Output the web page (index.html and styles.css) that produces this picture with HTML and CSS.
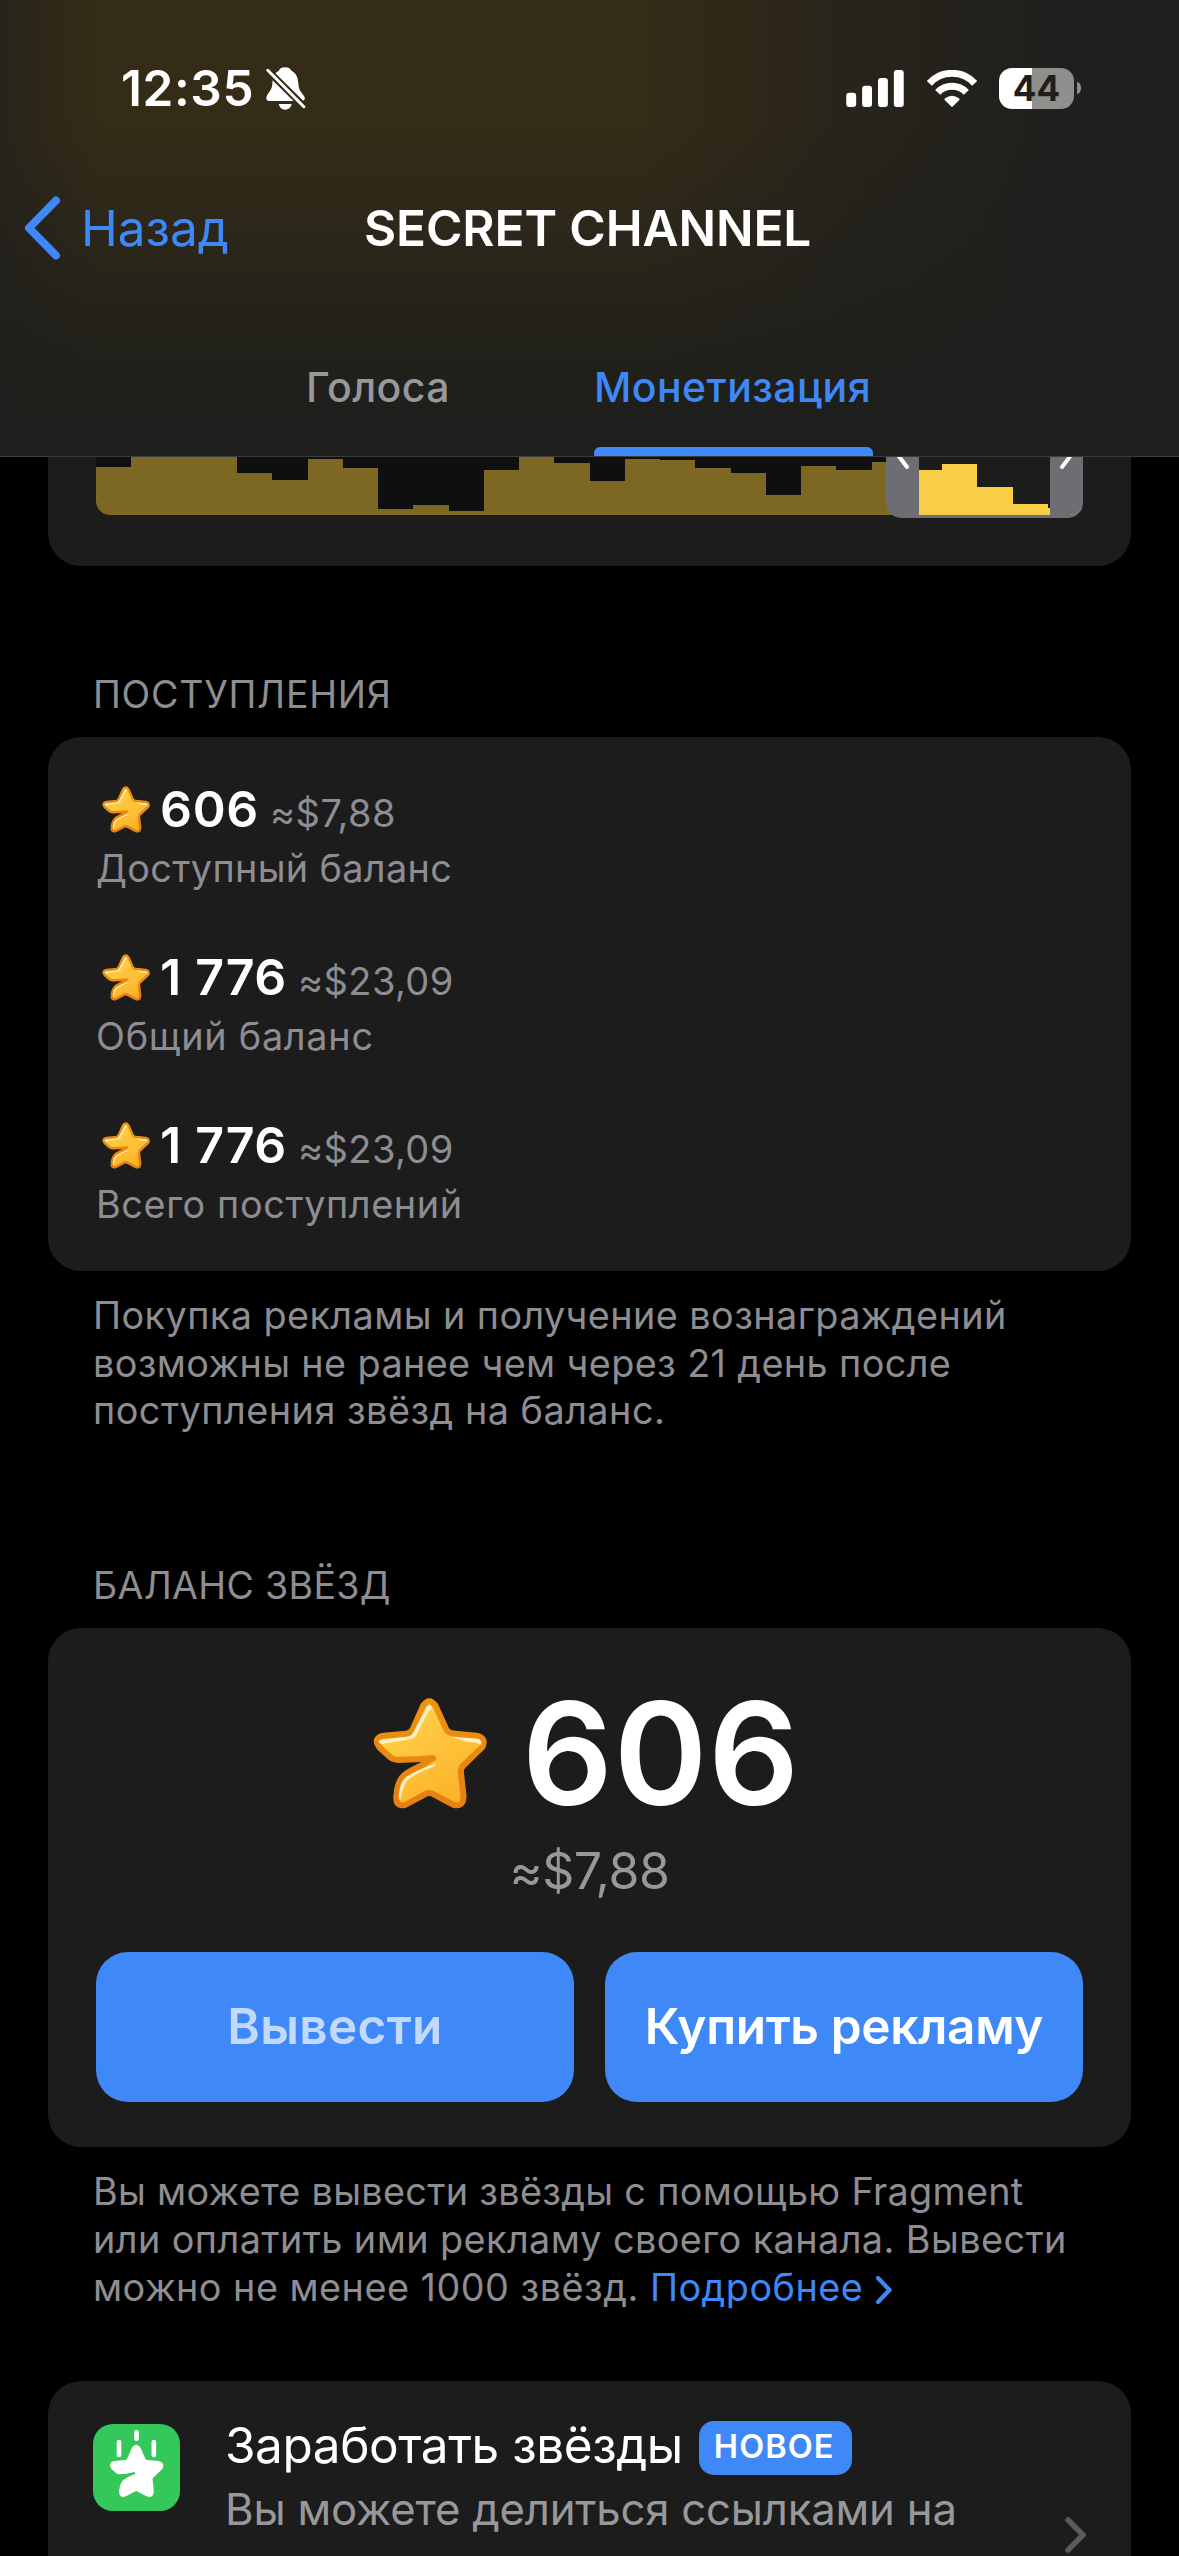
FILE: index.html
```html
<!DOCTYPE html>
<html lang="ru">
<head>
<meta charset="utf-8">
<title>Secret Channel</title>
<link rel="stylesheet" href="styles.css">
</head>
<body>
<svg class="defs" width="0" height="0" aria-hidden="true">
  <defs>
    <linearGradient id="gold" x1="0" y1="0" x2="0.6" y2="1">
      <stop offset="0" stop-color="#ffd84f"/>
      <stop offset="1" stop-color="#fdb32a"/>
    </linearGradient>
    <linearGradient id="rim" x1="0" y1="0" x2="0" y2="1">
      <stop offset="0" stop-color="#ec930f"/>
      <stop offset="1" stop-color="#e87f12"/>
    </linearGradient>
    <path id="star-shape" d="M150 22Q168 -4 186 22L218 92Q224 104 238 105L308 112Q340 118 326 146L270 200Q261 209 262 220L270 292Q270 326 240 318L180 286Q168 280 156 286L96 318Q66 326 70 290Q73 246 95 228Q108 218 150 198L179 179Q130 182 75 184Q60 184 50 175L20 148Q-2 118 32 112L98 106Q112 105 118 94Z"/>
    <symbol id="star" viewBox="0 0 340 330">
      <use href="#star-shape" fill="url(#gold)" stroke="url(#rim)" stroke-width="18" stroke-linejoin="round"/>
      <path fill="#ffeec2" d="M159 28Q168 12 177 28L173 36Q168 32 162 46L128 112Q122 122 108 123L26 137Q12 133 20 125L100 115Q114 113 120 102ZM236 115L312 121Q326 124 323 140L308 133Q270 131 236 115ZM186 195Q188 203 176 206Q124 226 104 244Q90 258 82 304Q74 304 78 280Q82 248 100 234Q130 216 186 195Z"/>
    </symbol>
  </defs>
</svg>

<header class="header">
  <div class="status">
    <span class="time">12:35</span>
    <svg class="bell" viewBox="0 0 120 130">
      <mask id="cut"><rect width="120" height="130" fill="#fff"/><path d="M-3 3L121 126" stroke="#000" stroke-width="21"/></mask>
      <g fill="#fff" mask="url(#cut)">
        <path d="M57 1C46 1 40 6 38 12C24 18 20 32 19 48C18 74 2 78 0 94Q0 103 10 103H106Q117 103 117 93C112 78 98 76 97 48C96 32 91 18 77 12C74 6 68 1 57 1Z"/>
      </g>
      <path fill="#fff" d="M38 112H77Q74 129 57 129Q42 129 38 112Z"/>
      <path d="M5 10L114 120" stroke="#fff" stroke-width="9" stroke-linecap="round"/>
    </svg>
    <div class="status-icons">
      <svg class="signal" viewBox="0 0 174 112" fill="#fff">
        <rect y="69" width="30" height="43" rx="9"/><rect x="48" y="48" width="30" height="64" rx="9"/><rect x="96" y="24" width="30" height="88" rx="9"/><rect x="144" width="30" height="112" rx="9"/>
      </svg>
      <svg class="wifi" viewBox="0 0 150 111">
        <path d="M7 40A92 92 0 0 1 143 40M32 67A60 60 0 0 1 118 67" fill="none" stroke="#fff" stroke-width="21"/>
        <path d="M53 90Q51 87 54 85Q75 69 96 85Q99 87 97 90L78 109Q75 112 72 109Z" fill="#fff"/>
      </svg>
      <div class="battery"><span class="battery-level">44</span><i class="battery-cap"></i></div>
    </div>
  </div>
  <nav class="nav">
    <svg class="back-icon" viewBox="0 0 38 64"><path d="M33 4.500L6 32L33 59.500" fill="none" stroke="#3e88f7" stroke-width="8" stroke-linecap="round" stroke-linejoin="round"/></svg>
    <a class="back">Назад</a>
    <h1 class="title">SECRET CHANNEL</h1>
  </nav>
  <div class="tabs">
    <a class="tab">Голоса</a>
    <a class="tab tab-active">Монетизация</a>
  </div>
</header>

<main class="content">
  <section class="card chart-card">
    <div class="chart">
      <div class="bars">
        <i class="bar" style="height:48px"></i><i class="bar" style="height:58px"></i><i class="bar" style="height:58px"></i><i class="bar" style="height:58px"></i><i class="bar" style="height:42px"></i><i class="bar" style="height:35px"></i><i class="bar" style="height:56px"></i><i class="bar" style="height:47px"></i><i class="bar" style="height:6px"></i><i class="bar" style="height:10px"></i><i class="bar" style="height:4px"></i><i class="bar" style="height:45px"></i><i class="bar" style="height:58px"></i><i class="bar" style="height:52px"></i><i class="bar" style="height:34px"></i><i class="bar" style="height:56px"></i><i class="bar" style="height:55px"></i><i class="bar" style="height:47px"></i><i class="bar" style="height:42px"></i><i class="bar" style="height:20px"></i><i class="bar" style="height:49px"></i><i class="bar" style="height:45px"></i><i class="bar" style="height:53px"></i><i class="bar bar-on" style="height:45px"></i><i class="bar bar-on" style="height:51px"></i><i class="bar bar-on" style="height:28px"></i><i class="bar bar-on" style="height:11px"></i><i class="bar bar-on" style="height:7px"></i>
      </div>
      <div class="range">
        <svg class="grip" viewBox="0 0 33 61"><path d="M9.500 -5L21 10" stroke="#fff" stroke-width="4" stroke-linecap="round"/></svg>
        <svg class="grip" viewBox="0 0 33 61"><path d="M23.500 -5L12 10" stroke="#fff" stroke-width="4" stroke-linecap="round"/></svg>
      </div>
    </div>
  </section>

  <h2 class="label label-first">ПОСТУПЛЕНИЯ</h2>
  <section class="card income">
    <div class="row">
      <div class="sum"><svg class="star"><use href="#star"/></svg><b class="amount">606</b><span class="usd">≈$7,88</span></div>
      <p class="caption caption-1">Доступный баланс</p>
    </div>
    <div class="row">
      <div class="sum"><svg class="star"><use href="#star"/></svg><b class="amount">1 776</b><span class="usd">≈$23,09</span></div>
      <p class="caption caption-2">Общий баланс</p>
    </div>
    <div class="row">
      <div class="sum"><svg class="star"><use href="#star"/></svg><b class="amount">1 776</b><span class="usd">≈$23,09</span></div>
      <p class="caption">Всего поступлений</p>
    </div>
  </section>
  <p class="note note-income">
    <span class="line">Покупка рекламы и получение вознаграждений</span>
    <span class="line line-tight">возможны не ранее чем через 21 день после</span>
    <span class="line line-loose">поступления звёзд на баланс.</span>
  </p>

  <h2 class="label label-balance">БАЛАНС ЗВЁЗД</h2>
  <section class="card balance">
    <div class="total"><svg class="star-big"><use href="#star"/></svg><b class="total-value">606</b></div>
    <p class="total-usd">≈$7,88</p>
    <div class="actions">
      <button class="btn btn-muted">Вывести</button>
      <button class="btn">Купить рекламу</button>
    </div>
  </section>
  <p class="note note-balance">
    <span class="line line-tighter">Вы можете вывести звёзды с помощью Fragment</span>
    <span class="line">или оплатить ими рекламу своего канала. Вывести</span>
    <span class="line line-loose">можно не менее 1000 звёзд. <a class="more">Подробнее<svg class="more-icon" viewBox="0 0 18 30"><path d="M3 3L14.500 15L3 27" fill="none" stroke="#3e88f7" stroke-width="4.200" stroke-linecap="round" stroke-linejoin="round"/></svg></a></span>
  </p>

  <section class="card earn">
    <svg class="earn-icon" viewBox="0 0 261 261">
      <rect width="261" height="261" rx="60" fill="#34c759"/>
      <path d="M130.500 25V44M78 54V93M182.500 54V93" stroke="#fff" stroke-width="14" stroke-linecap="round"/>
      <g transform="translate(49.500 62) scale(.477)">
        <use href="#star-shape" fill="#fff" stroke="#fff" stroke-width="18" stroke-linejoin="round"/>
        <path d="M40 194Q90 196 154 180" fill="none" stroke="#34c759" stroke-width="15" stroke-linecap="round"/>
      </g>
    </svg>
    <div class="earn-text">
      <div class="earn-head"><span class="earn-title">Заработать звёзды</span><span class="badge">НОВОЕ</span></div>
      <p class="earn-sub">Вы можете делиться ссылками на</p>
    </div>
    <svg class="chevron" viewBox="0 0 21 36"><path d="M3 3L18 18L3 33" fill="none" stroke="#5b5b5e" stroke-width="5.500" stroke-linecap="round" stroke-linejoin="round"/></svg>
  </section>
</main>
</body>
</html>
```
FILE: styles.css
```css
* { box-sizing: border-box; margin: 0; padding: 0; }

body {
  width: 1179px;
  height: 2556px;
  overflow: hidden;
  background: #000;
  color: #fff;
  font-family: Inter, "Liberation Sans", sans-serif;
}

svg { display: block; flex: none; }
.defs { position: absolute; }

/* Header */
.header {
  height: 457px;
  border-bottom: 1px solid #3b3b3b;
  background:
    linear-gradient(90deg, rgba(30, 30, 29, .55) 0, rgba(30, 30, 29, 0) 100px),
    linear-gradient(90deg, rgba(30, 30, 29, 0) 640px, rgba(30, 30, 29, .6) 860px, #1e1e1e 1120px),
    linear-gradient(180deg, #352c17 0, #352c17 120px, #2c271a 230px, #222119 340px, #1e1e1d 430px);
}

.status {
  display: flex;
  align-items: center;
  height: 176px;
  padding: 0 98px 0 121px;
}
.time {
  font-size: 49.5px;
  font-weight: 600;
  letter-spacing: .6px;
  line-height: 176px;
}
.bell { width: 40px; height: 43px; margin-left: 12px; }
.status-icons { display: flex; align-items: center; margin-left: auto; }
.signal { width: 58px; height: 37px; margin-right: 23px; }
.wifi { width: 50px; height: 37px; margin-right: 22px; }
.battery {
  position: relative;
  width: 75px;
  height: 41px;
  margin-right: 7px;
  border-radius: 13px;
  background: linear-gradient(90deg, #fff 33px, #8f8f8e 33px);
  color: #1e1e1d;
  text-align: center;
}
.battery-level { font-size: 35px; font-weight: 700; line-height: 41px; }
.battery-cap {
  position: absolute;
  left: 78px;
  top: 14px;
  width: 4px;
  height: 12px;
  border-radius: 0 4px 4px 0 / 0 6px 6px 0;
  background: #8f8f8e;
}

.nav {
  display: grid;
  grid-template-columns: 38px 277px 1fr;
  align-items: center;
  height: 104px;
  padding-left: 23px;
}
.back-icon { width: 38px; height: 64px; }
.back { padding-left: 20px; font-size: 49.5px; color: #3e88f7; }
.title { padding-left: 26px; font-size: 49.5px; font-weight: 600; letter-spacing: -.1px; white-space: nowrap; }

.tabs { display: flex; gap: 144px; height: 176px; padding: 38px 0 0 306px; }
.tab {
  width: 144px;
  font-size: 41px;
  font-weight: 500;
  letter-spacing: .4px;
  line-height: 138px;
  color: #98989c;
}
.tab-active { position: relative; width: 279px; color: #3e88f7; }
.tab-active::after {
  content: "";
  position: absolute;
  left: 0;
  right: 0;
  bottom: 0;
  height: 9px;
  border-radius: 6px 6px 0 0;
  background: #3e88f7;
}

/* Cards */
.content { padding: 0 48px; }
.card { border-radius: 33px; background: #1c1c1d; }

.chart-card { height: 109px; padding: 0 48px; border-radius: 0 0 33px 33px; }
.chart { position: relative; height: 61px; }
.bars {
  display: flex;
  align-items: flex-end;
  height: 58px;
  border-radius: 0 0 12px 14px;
  overflow: hidden;
  background: linear-gradient(90deg, #0f0f0f 800px, #1c1c1d 800px);
}
.bar { flex: 1; background: #7c6723; }
.bar-on { background: #f7ce46; }
.range {
  position: absolute;
  left: 790px;
  top: 0;
  display: flex;
  justify-content: space-between;
  width: 197px;
  height: 61px;
  border-radius: 0 0 15px 15px;
  overflow: hidden;
  border-bottom: 3px solid #6e6d73;
}
.grip { width: 33px; height: 61px; background: #6e6d73; }

.label {
  padding-left: 45px;
  font-size: 37.5px;
  font-weight: 400;
  line-height: 48px;
  color: #8d8d92;
}
.label-first { margin: 105px 0 18px; letter-spacing: .75px; }
.label-balance { margin: 127px 0 18px; letter-spacing: .32px; }

.income {
  display: flex;
  flex-direction: column;
  gap: 55px;
  height: 534px;
  padding: 42px 48px 0;
}
.sum { display: flex; align-items: baseline; height: 60px; }
.star { align-self: center; width: 48px; height: 47px; margin: 0 10px 0 6px; }
.amount { margin-right: 11px; font-size: 50px; font-weight: 600; letter-spacing: .7px; line-height: 60px; }
.usd { font-size: 38px; letter-spacing: .4px; line-height: 48px; color: #8d8d92; }
.caption {
  margin-top: 5px;
  font-size: 37.8px;
  letter-spacing: .6px;
  line-height: 48px;
  color: #8d8d92;
}
.caption-1 { letter-spacing: .35px; }
.caption-2 { letter-spacing: .75px; }

.note { padding-left: 45px; font-size: 37.8px; color: #8d8d92; }
.note-income { margin-top: 21px; line-height: 47.7px; }
.note-balance { margin-top: 20px; line-height: 48px; }
.line { display: block; letter-spacing: .42px; white-space: nowrap; }
.line-tight { letter-spacing: .37px; }
.line-tighter { letter-spacing: .3px; }
.line-loose { letter-spacing: .48px; }
.more { color: #3e88f7; }
.more-icon { display: inline-block; width: 18px; height: 30px; margin-left: 12px; vertical-align: -4px; }

.balance { height: 519px; padding: 40px 48px 0; }
.total { display: flex; align-items: center; justify-content: center; height: 170px; }
.star-big { width: 114px; height: 111px; margin: 0 35px 0 0; }
.total-value { margin-right: 6px; font-size: 142px; font-weight: 600; letter-spacing: .9px; line-height: 170px; }
.total-usd {
  margin-top: 3px;
  font-size: 50px;
  letter-spacing: -.38px;
  line-height: 60px;
  color: #98989c;
  text-align: center;
}
.actions { display: grid; grid-template-columns: 1fr 1fr; gap: 31px; margin-top: 51px; }
.btn {
  height: 150px;
  padding-bottom: 2px;
  border: 0;
  border-radius: 32px;
  background: #3e88f7;
  color: #fff;
  font: 600 49.5px/148px Inter, "Liberation Sans", sans-serif;
  letter-spacing: -.35px;
}
.btn-muted { color: #c3d9fc; letter-spacing: .3px; }

.earn {
  display: flex;
  align-items: flex-start;
  height: 220px;
  margin-top: 70px;
  padding: 34px 45px 0;
}
.earn-icon { width: 87px; height: 87px; margin: 9px 45px 0 0; }
.earn-head { display: flex; height: 60px; }
.earn-title { font-size: 49.5px; letter-spacing: -.45px; line-height: 60px; }
.badge {
  width: 153px;
  height: 54px;
  margin: 6px 0 0 16px;
  padding-left: 15px;
  border-radius: 15px;
  background: #3e88f7;
  font-size: 32.5px;
  font-weight: 600;
  letter-spacing: 1.1px;
  line-height: 51px;
}
.earn-sub {
  margin-top: 8px;
  font-size: 43.7px;
  letter-spacing: -.19px;
  line-height: 54px;
  color: #98989c;
  white-space: nowrap;
}
.chevron { width: 21px; height: 36px; margin: 102px 0 0 auto; }
```
